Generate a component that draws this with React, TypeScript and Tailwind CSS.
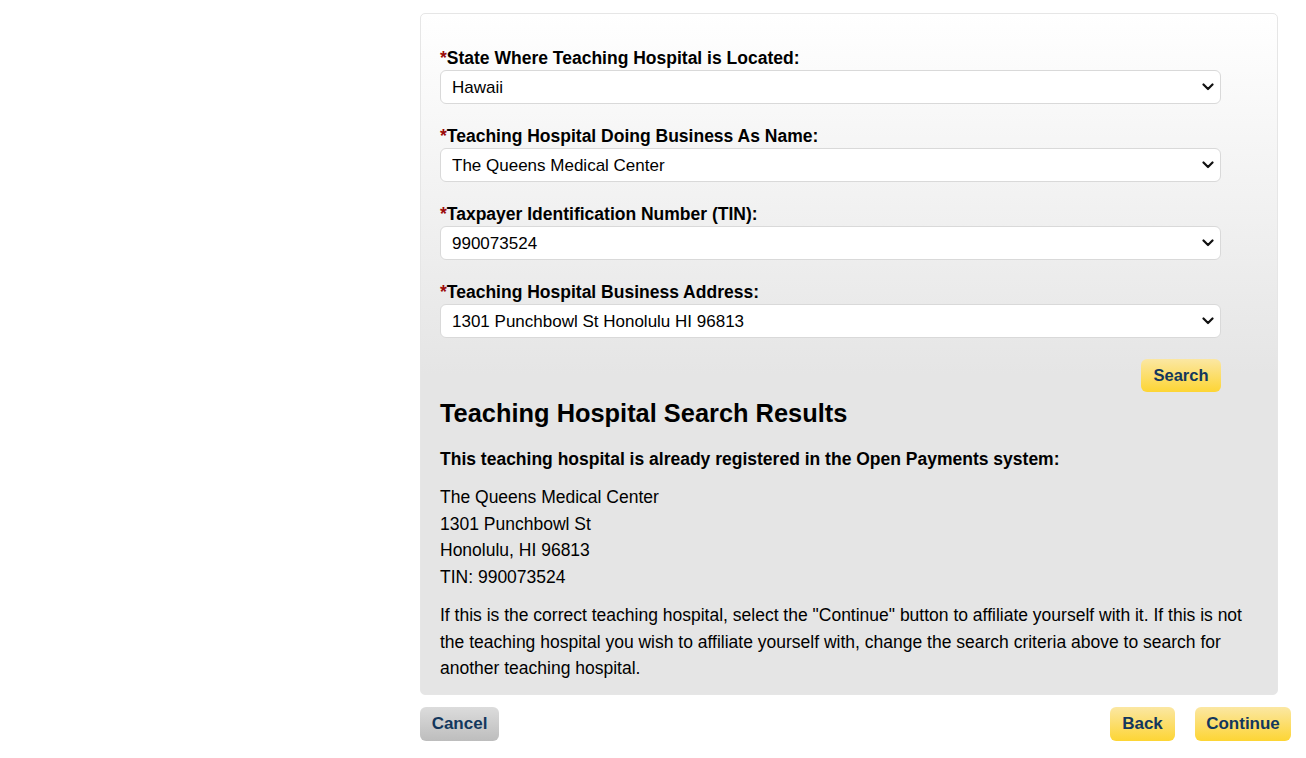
import React from "react";

const Chevron = () => (
  <svg width="12" height="8" viewBox="0 0 12 8" className="pointer-events-none absolute right-[7px] top-1/2 -translate-y-1/2">
    <path d="M1.5 1.5 L6 6 L10.5 1.5" fill="none" stroke="#111" strokeWidth="2.2" strokeLinecap="round" strokeLinejoin="round" />
  </svg>
);

function Field({ label, value }: { label: string; value: string }) {
  return (
    <div className="mb-[10px]">
      <label className="block text-[17.5px] font-bold leading-[20px] text-black">
        <span className="text-[#9b0b0b]">*</span>
        {label}
      </label>
      <div className="relative mt-[2px] w-[781px]">
        <select
          defaultValue={value}
          className="h-[34px] w-full appearance-none rounded-[6px] border border-[#d9d9d9] bg-white pl-[11px] pt-[2px] text-[17px] text-black outline-none"
        >
          <option>{value}</option>
        </select>
        <Chevron />
      </div>
    </div>
  );
}

export default function App() {
  return (
    <div className="min-h-[758px] bg-white font-['Liberation_Sans',Arial,sans-serif]">
      <div className="ml-[420px] w-[871px] pt-[13px]">
        <div className="w-[858px] rounded-[5px] border border-[#e6e6e6] bg-[linear-gradient(to_bottom,#ffffff_0px,#e5e5e5_360px,#e5e5e5_100%)] pb-[12px] pl-[19px] pr-[20px] pt-[34px]">
          <div>
            <div className="h-[78px]"><Field label="State Where Teaching Hospital is Located:" value="Hawaii" /></div>
            <div className="h-[78px]"><Field label="Teaching Hospital Doing Business As Name:" value="The Queens Medical Center" /></div>
            <div className="h-[78px]"><Field label="Taxpayer Identification Number (TIN):" value="990073524" /></div>
            <div className="h-[78px]"><Field label="Teaching Hospital Business Address:" value="1301 Punchbowl St Honolulu HI 96813" /></div>
          </div>
          <div className="-mt-[1px] flex w-[781px] justify-end">
            <button className="h-[33px] w-[80px] rounded-[6px] bg-[linear-gradient(to_bottom,#fbe7a3,#fdd534)] text-[16.5px] font-bold text-[#13375d]">
              Search
            </button>
          </div>
          <h2 className="mt-[5px] text-[25.4px] font-bold leading-[32px] text-black">Teaching Hospital Search Results</h2>
          <p className="mt-[19px] text-[17.5px] font-bold leading-[22px] text-black">
            This teaching hospital is already registered in the Open Payments system:
          </p>
          <div className="mt-[14px] text-[17.5px] leading-[26.5px] text-black">
            <div>The Queens Medical Center</div>
            <div>1301 Punchbowl St</div>
            <div>Honolulu, HI 96813</div>
            <div>TIN: 990073524</div>
          </div>
          <p className="mt-[12px] text-[17.5px] leading-[26.5px] text-black">
            If this is the correct teaching hospital, select the "Continue" button to affiliate yourself with it. If this is not
            the teaching hospital you wish to affiliate yourself with, change the search criteria above to search for
            another teaching hospital.
          </p>
        </div>
        <div className="mt-[12px] flex items-center justify-between">
          <button className="h-[34px] w-[79px] rounded-[6px] bg-[linear-gradient(to_bottom,#dcdcdc,#bdbdbd)] text-[17px] font-bold text-[#13375d]">
            Cancel
          </button>
          <div className="flex gap-[20px]">
            <button className="h-[34px] w-[65px] rounded-[6px] bg-[linear-gradient(to_bottom,#fbe7a3,#fdd534)] text-[17px] font-bold text-[#13375d]">
              Back
            </button>
            <button className="h-[34px] w-[96px] rounded-[6px] bg-[linear-gradient(to_bottom,#fbe7a3,#fdd534)] text-[17px] font-bold text-[#13375d]">
              Continue
            </button>
          </div>
        </div>
      </div>
    </div>
  );
}
